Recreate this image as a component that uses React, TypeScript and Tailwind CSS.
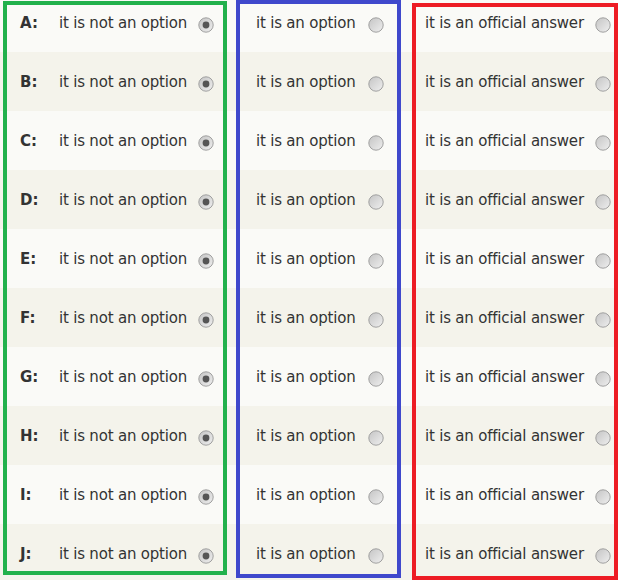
import React from "react";

const letters = ["A", "B", "C", "D", "E", "F", "G", "H", "I", "J"];

function Radio({ checked }: { checked?: boolean }) {
  return (
    <svg width="16" height="16" viewBox="0 0 16 16" className="mt-[2px] shrink-0">
      <defs>
        <linearGradient id={checked ? "gc" : "gu"} x1="0" y1="0" x2="1" y2="1">
          <stop offset="0" stopColor="#c4c4c4" />
          <stop offset="1" stopColor="#efefef" />
        </linearGradient>
      </defs>
      <circle cx="8" cy="8" r="7.2" fill={`url(#${checked ? "gc" : "gu"})`} stroke="#a0a0a0" strokeWidth="1" />
      {checked && <circle cx="8" cy="8" r="3.4" fill="#555555" />}
    </svg>
  );
}

export default function App() {
  return (
    <div
      className="relative w-[622px] h-[580px] overflow-hidden bg-white text-[#333]"
      style={{ fontFamily: "'DejaVu Sans', Verdana, sans-serif" }}
    >
      <div className="w-[614px] -mt-[7px] bg-[#f9f9f5]">
        {letters.map((l, i) => (
          <div
            key={l}
            className={`grid grid-cols-[230px_175px_209px] h-[59px] ${i % 2 === 0 ? "bg-[#fafaf7]" : "bg-[#f4f3eb]"}`}
          >
            <div className="flex items-center pt-[2px] pl-[20px] pr-[16px]">
              <span className="w-[39px] font-bold text-[15px]">{l}:</span>
              <span className="flex-1 text-[15px] tracking-[-0.2px]">it is not an option</span>
              <Radio checked />
            </div>
            <div className="flex items-center pt-[2px] pl-[26px] pr-[21px]">
              <span className="flex-1 text-[15px] tracking-[-0.2px]">it is an option</span>
              <Radio />
            </div>
            <div className="flex items-center pt-[2px] pl-[20px] pr-[3px]">
              <span className="flex-1 text-[15px] tracking-[-0.2px]">it is an official answer</span>
              <Radio />
            </div>
          </div>
        ))}
      </div>
      <div className="absolute left-[3px] top-[1px] w-[224px] h-[574px] border-4 border-[#22b14c]" />
      <div className="absolute left-[236px] top-0 w-[165px] h-[578px] border-4 border-[#3f48cc]" />
      <div className="absolute left-[412px] top-[3px] w-[206px] h-[577px] border-4 border-[#ed1c24]" />
    </div>
  );
}
